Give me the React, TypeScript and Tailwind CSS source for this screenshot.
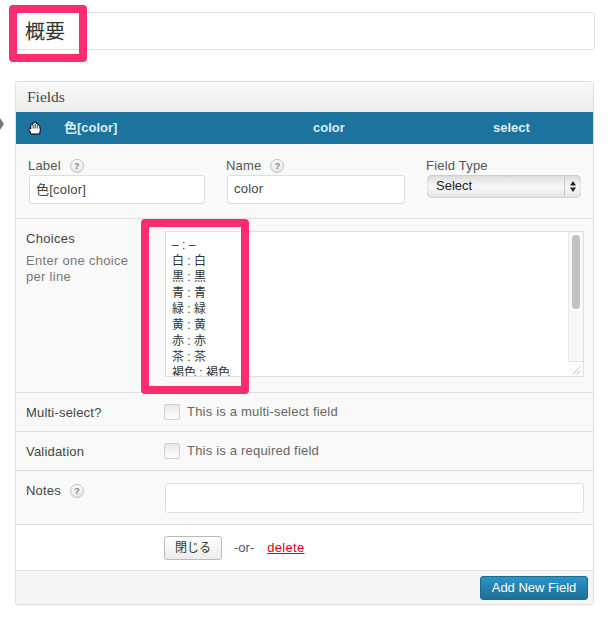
const font = { fontFamily: '"Liberation Sans", "Noto Sans CJK JP", sans-serif' };

const choices = "– : –\n白 : 白\n黒 : 黒\n青 : 青\n緑 : 緑\n黄 : 黄\n赤 : 赤\n茶 : 茶\n褐色 : 褐色\n灰色 : 灰色";

function Help() {
    return (
        <span className="ml-[9px] inline-flex h-[14px] w-[14px] items-center justify-center rounded-full border border-[#c0c0c0] bg-gradient-to-b from-white to-[#e4e4e4] text-[9px] leading-none font-bold tracking-normal text-[#808080]">
            ?
        </span>
    );
}

function HandIcon() {
    return (
        <svg width="14" height="14" viewBox="0 0 14 14" className="block">
            <path
                d="M2.5 13 L2.2 10.5 L.8 8.4 Q.5 7.2 1.6 7.2 L2.8 8 L2.8 3.8 Q3.5 2.9 4.3 3.8 L4.5 2.2 Q5.3 1.3 6.1 2.2 L6.3 1.4 Q7.2 .6 8 1.5 L8.2 2.4 Q9.1 1.7 9.8 2.7 L10 4 Q11 3.4 11.6 4.3 L12.4 9.5 L11.8 11 L11.8 13 Z"
                fill="#fff"
                stroke="#000"
                strokeWidth="1"
                strokeLinejoin="round"
            />
            <path d="M5.2 3.5v4M7.2 2.8v4.7M9.2 3.5v4" stroke="#000" strokeWidth=".8" />
        </svg>
    );
}

function CheckRow({ label, text }: { label: string; text: string }) {
    return (
        <div className="flex h-[39px] items-center border-b border-[#dfdfdf] bg-[#f9f9f9]">
            <div className="w-[148px] pt-[1px] pl-[10px] text-[13px] tracking-[0.2px] text-[#444]">{label}</div>
            <input type="checkbox" readOnly className="h-[16px] w-[16px] appearance-none rounded-[2px] border border-[#cfcfcf] bg-gradient-to-b from-[#e8e8e8] to-white" />
            <span className="ml-[7px] pb-[1px] text-[13px] tracking-[0.2px] text-[#666]">{text}</span>
        </div>
    );
}

export default function App() {
    return (
        <div style={font} className="relative h-[619px] w-[613px] overflow-hidden bg-white">
            {/* title */}
            <div className="pt-[12px] pl-[16px]">
                <input
                    readOnly
                    value="概要"
                    className="h-[38px] w-[579px] rounded-[3px] border border-[#dfdfdf] bg-white pb-[2px] pl-[8px] text-[20px] text-[#333] outline-none"
                    style={font}
                />
            </div>

            {/* panel */}
            <div className="mt-[31px] ml-[15px] w-[579px] rounded-[3px] border border-[#dfdfdf] shadow-[0_1px_1px_rgba(0,0,0,0.04)]">
                <div className="flex h-[30px] items-center bg-gradient-to-b from-[#f9f9f9] to-[#ececec] pl-[11px] font-['Liberation_Serif'] text-[15.5px] text-[#464646]">
                    Fields
                </div>

                <div className="flex h-[32px] items-center bg-[#1b739e] text-[13px] font-bold text-[#d8eef8]">
                    <div className="w-[48px] pl-[12px]">
                        <HandIcon />
                    </div>
                    <div className="w-[249px]">色[color]</div>
                    <div className="w-[180px]">color</div>
                    <div>select</div>
                </div>

                {/* label / name / type */}
                <div className="flex h-[75px] gap-[21px] border-b border-[#dfdfdf] bg-[#f9f9f9] pt-[13px] pl-[12px] text-[13px] tracking-[0.2px] text-[#555]">
                    <div className="w-[177px]">
                        <div className="flex h-[18px] items-center">
                            Label
                            <Help />
                        </div>
                        <input readOnly value="色[color]" style={font} className="ml-[1px] h-[29px] w-[176px] rounded-[3px] border border-[#dfdfdf] bg-white pb-[2px] pl-[6px] text-[13px] text-[#444] outline-none" />
                    </div>
                    <div className="w-[179px]">
                        <div className="flex h-[18px] items-center">
                            Name
                            <Help />
                        </div>
                        <input readOnly value="color" style={font} className="ml-[1px] h-[29px] w-[178px] rounded-[3px] border border-[#dfdfdf] bg-white pb-[2px] pl-[6px] text-[13px] text-[#444] outline-none" />
                    </div>
                    <div className="w-[155px]">
                        <div className="flex h-[18px] items-center">Field Type</div>
                        <div className="ml-[1px] flex h-[23px] w-[154px] items-center rounded-[5px] bg-gradient-to-b from-[#dcdcdc] via-[#f7f7f7] to-[#e4e4e4] shadow-[inset_0_0_2px_rgba(0,0,0,0.25)]">
                            <span className="flex-1 pb-[2px] pl-[9px] text-[13px] tracking-normal text-[#222]">Select</span>
                            <span className="flex h-full w-[17px] items-center justify-center border-l border-[#c8c8c8]">
                                <svg width="6" height="11" viewBox="0 0 6 11">
                                    <path d="M3 0l3 4.4H0zM3 11L0 6.6h6z" fill="#222" />
                                </svg>
                            </span>
                        </div>
                    </div>
                </div>

                {/* choices */}
                <div className="flex h-[174px] border-b border-[#dfdfdf] bg-[#f9f9f9]">
                    <div className="w-[149px] pt-[12px] pl-[10px] text-[13px] leading-[16px] tracking-[0.3px] text-[#444]">
                        Choices
                        <p className="mt-[6px] text-[#777]">
                            Enter one choice
                            <br />
                            per line
                        </p>
                    </div>
                    <div className="relative mt-[12px] h-[146px] w-[419px]">
                        <textarea
                            readOnly
                            value={choices}
                            style={font}
                            className="h-full w-full resize-none overflow-hidden border border-[#dfdfdf] bg-white pt-[5px] pl-[6px] text-[12px] leading-[16px] text-[#333] outline-none"
                        />
                        <div className="absolute top-[1px] right-[1px] bottom-[1px] w-[15px] border-l border-[#e8e8e8] bg-[#f8f8f8]">
                            <div className="mx-auto mt-[3px] h-[74px] w-[8px] rounded-full bg-[#c2c2c2]" />
                            <div className="absolute right-0 bottom-0 h-[15px] w-[15px] border-t border-[#e0e0e0] bg-white">
                                <svg width="14" height="14" viewBox="0 0 14 14">
                                    <path d="M5 12l7-7M9 12l3-3" stroke="#777" strokeWidth=".8" strokeDasharray="1 .6" />
                                </svg>
                            </div>
                        </div>
                    </div>
                </div>

                <CheckRow label="Multi-select?" text="This is a multi-select field" />
                <CheckRow label="Validation" text="This is a required field" />

                {/* notes */}
                <div className="flex h-[54px] border-b border-[#dfdfdf] bg-[#f9f9f9]">
                    <div className="flex h-[40px] w-[149px] items-center pl-[10px] text-[13px] tracking-[0.2px] text-[#444]">
                        Notes
                        <Help />
                    </div>
                    <input readOnly className="mt-[12px] h-[30px] w-[419px] rounded-[3px] border border-[#dfdfdf] bg-white outline-none" />
                </div>

                {/* actions */}
                <div className="flex h-[46px] items-center border-b border-[#dfdfdf] bg-white pl-[148px] text-[13px]">
                    <button style={font} className="h-[24px] w-[58px] rounded-[3px] border border-[#bbb] bg-gradient-to-b from-white to-[#ececec] text-[12px] text-[#333]">
                        閉じる
                    </button>
                    <span className="ml-[12px] text-[#555]">-or-</span>
                    <a className="ml-[13px] tracking-[0.3px] text-[#d9001f] underline">delete</a>
                </div>

                {/* footer */}
                <div className="flex h-[33px] items-center justify-end rounded-b-[3px] bg-[#f5f5f5] pr-[5px]">
                    <button style={font} className="h-[24px] w-[108px] rounded-[3px] border border-[#1d6a8f] bg-gradient-to-b from-[#2a95c5] to-[#1d6f97] text-[13px] text-white">
                        Add New Field
                    </button>
                </div>
            </div>

            {/* sortable handle poking in from the left */}
            <div className="absolute top-[118px] left-0 h-0 w-0 border-y-[6px] border-l-[4px] border-y-transparent border-l-[#777]" />

            {/* pink annotations */}
            <div className="absolute top-[5px] left-[9px] h-[57px] w-[78px] rounded-[4px] border-[8px] border-[#fb2d6f]" />
            <div className="absolute top-[219px] left-[141px] h-[175px] w-[108px] rounded-[4px] border-[8px] border-[#fb2d6f]" />
        </div>
    );
}
